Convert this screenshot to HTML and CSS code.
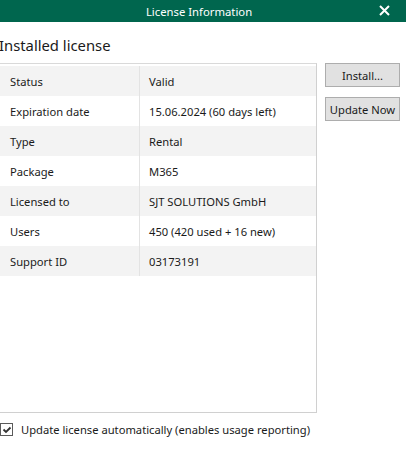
FILE: index.html
```html
<!DOCTYPE html>
<html lang="en">
    <head>
        <meta charset="UTF-8" />
        <title>License Information</title>
        <link rel="stylesheet" href="styles.css">
    </head>
    <body>
        <!-- 타이틀 바 -->
        <div class="title-bar">
            <span class="title-text">License Information</span>
            <span class="close-btn">
                <svg width="11" height="11" viewBox="0 0 11 11">
                    <path d="M1 1 L10 10 M10 1 L1 10" stroke="#ffffff" stroke-width="2" />
                </svg>
            </span>
        </div>

        <div class="content">
            <h1 class="section-title">Installed license</h1>

            <div class="main-row">
                <!-- 라이선스 표 -->
                <div class="license-table">
                    <div class="table-row">
                        <div class="cell-key">Status</div>
                        <div class="cell-value">Valid</div>
                    </div>
                    <div class="table-row">
                        <div class="cell-key">Expiration date</div>
                        <div class="cell-value">15.06.2024 (60 days left)</div>
                    </div>
                    <div class="table-row">
                        <div class="cell-key">Type</div>
                        <div class="cell-value">Rental</div>
                    </div>
                    <div class="table-row">
                        <div class="cell-key">Package</div>
                        <div class="cell-value">M365</div>
                    </div>
                    <div class="table-row">
                        <div class="cell-key">Licensed to</div>
                        <div class="cell-value">SJT SOLUTIONS GmbH</div>
                    </div>
                    <div class="table-row">
                        <div class="cell-key">Users</div>
                        <div class="cell-value">450 (420 used + 16 new)</div>
                    </div>
                    <div class="table-row">
                        <div class="cell-key">Support ID</div>
                        <div class="cell-value">03173191</div>
                    </div>
                </div>

                <!-- 버튼 -->
                <div class="side-buttons">
                    <button class="btn">Install...</button>
                    <button class="btn">Update Now</button>
                </div>
            </div>

            <label class="auto-update">
                <span class="checkbox">
                    <svg width="10" height="8" viewBox="0 0 10 8">
                        <path d="M1.5 3.5 L4 6 L8.5 1.5" fill="none" stroke="#333333" stroke-width="1.8" />
                    </svg>
                </span>
                Update license automatically (enables usage reporting)
            </label>
        </div>
    </body>
</html>
```

FILE: styles.css
```css
:root {
    --green: #00664e;
    --row-alt: #f3f3f3;
    --line: #e3e3e3;
    --text: #1a1a1a;
}

* {
    margin: 0;
    padding: 0;
    box-sizing: border-box;
}

body {
    font-family: "Noto Sans", "Open Sans", sans-serif;
    font-size: 11.2px;
    color: var(--text);
    background: #ffffff;
    width: 406px;
    height: 464px;
    overflow: hidden;
}

/* 타이틀 바 */
.title-bar {
    position: relative;
    height: 22px;
    background: var(--green);
    color: #ffffff;
    display: flex;
    align-items: center;
    justify-content: center;
}

.title-text {
    font-size: 11.3px;
    margin-left: -8px;
}

.close-btn {
    position: absolute;
    right: 16px;
    top: 5px;
    display: flex;
}

.content {
    padding: 13px 0 0 0;
}

.section-title {
    font-size: 14.8px;
    font-weight: 400;
    line-height: 20px;
    margin-left: -1px;
    margin-bottom: 8px;
}

.main-row {
    display: flex;
    align-items: flex-start;
}

/* 라이선스 표 */
.license-table {
    width: 317px;
    height: 350px;
    border-top: 1px solid #d9d9d9;
    border-right: 1px solid #d0d0d0;
    border-bottom: 1px solid #d0d0d0;
    padding-top: 2px;
    display: flex;
    flex-direction: column;
}

.table-row {
    display: flex;
    height: 30px;
    align-items: stretch;
}

.table-row:nth-child(odd) {
    background: var(--row-alt);
}

.cell-key {
    width: 140px;
    padding-left: 10px;
    border-right: 1px solid var(--line);
    display: flex;
    align-items: center;
}

.cell-value {
    flex: 1;
    padding-left: 9px;
    display: flex;
    align-items: center;
}

/* 버튼 */
.side-buttons {
    display: flex;
    flex-direction: column;
    gap: 10px;
    margin-left: 8px;
}

.btn {
    width: 75px;
    height: 24px;
    font-family: inherit;
    font-size: 11.2px;
    color: var(--text);
    background: #e1e1e1;
    border: 1px solid #adadad;
}

/* 자동 업데이트 체크박스 */
.auto-update {
    display: flex;
    align-items: center;
    gap: 8px;
    margin-top: 9px;
}

.checkbox {
    width: 13px;
    height: 13px;
    border: 1px solid #5a5a5a;
    display: flex;
    align-items: center;
    justify-content: center;
}
```
